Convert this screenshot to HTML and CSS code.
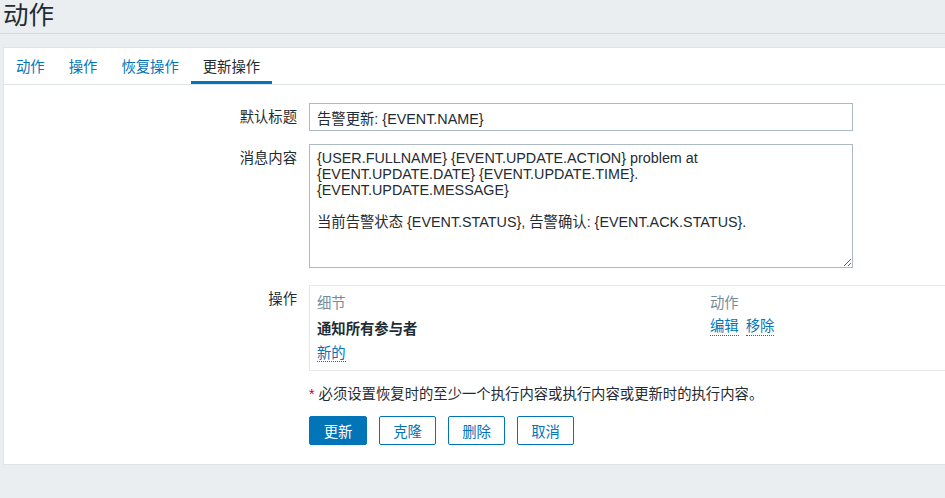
FILE: index.html
```html
<!DOCTYPE html>
<html lang="zh-CN">
<head>
<meta charset="utf-8">
<title>动作</title>
<link rel="stylesheet" href="styles.css">
</head>
<body>
<header class="page-header">
  <h1 class="page-title">动作</h1>
</header>
<main class="panel">
  <nav class="tabs">
    <a class="tab">动作</a>
    <a class="tab">操作</a>
    <a class="tab">恢复操作</a>
    <a class="tab tab-active">更新操作</a>
  </nav>
  <form class="form">
    <div class="row row-subject">
      <label class="label label-input">默认标题</label>
      <div class="field"><input class="text-input" type="text" value="告警更新: {EVENT.NAME}"></div>
    </div>
    <div class="row row-message">
      <label class="label label-area">消息内容</label>
      <div class="field"><textarea class="text-area">{USER.FULLNAME} {EVENT.UPDATE.ACTION} problem at {EVENT.UPDATE.DATE} {EVENT.UPDATE.TIME}.
{EVENT.UPDATE.MESSAGE}

当前告警状态 {EVENT.STATUS}, 告警确认: {EVENT.ACK.STATUS}.</textarea></div>
    </div>
    <div class="row row-ops">
      <label class="label label-ops">操作</label>
      <div class="field">
        <div class="ops-box">
          <div class="ops-line ops-head">
            <span class="col-detail">细节</span>
            <span class="col-action">动作</span>
          </div>
          <div class="ops-line">
            <span class="col-detail strong">通知所有参与者</span>
            <span class="col-action"><a class="link">编辑</a><a class="link">移除</a></span>
          </div>
          <div class="ops-line">
            <span class="col-detail"><a class="link">新的</a></span>
          </div>
        </div>
      </div>
    </div>
    <div class="row row-note">
      <div class="label"></div>
      <div class="field note"><span class="asterisk">*</span> 必须设置恢复时的至少一个执行内容或执行内容或更新时的执行内容。</div>
    </div>
    <div class="row row-buttons">
      <div class="label"></div>
      <div class="field buttons">
        <button type="button" class="btn btn-primary">更新</button>
        <button type="button" class="btn">克隆</button>
        <button type="button" class="btn">删除</button>
        <button type="button" class="btn">取消</button>
      </div>
    </div>
  </form>
</main>
</body>
</html>
```
FILE: styles.css
```css
html, body {
  margin: 0;
  padding: 0;
}
body {
  background: #ebeef0;
  font-family: "Liberation Sans", "Noto Sans CJK SC", sans-serif;
  font-size: 14.35px;
  color: #1f2c33;
  overflow: hidden;
  width: 945px;
  height: 498px;
}
.page-header {
  height: 33px;
  border-bottom: 1px solid #d5dadd;
  padding-left: 3px;
}
.page-title {
  margin: 0;
  font-weight: normal;
  font-size: 25.5px;
  line-height: 30px;
  color: #1f2c33;
}
.panel {
  display: block;
  margin: 13px 0 0 3px;
  background: #fff;
  border: 1px solid #dfe4e7;
  border-right: none;
  height: 416px;
  overflow: hidden;
}
.tabs {
  display: flex;
  border-bottom: 1px solid #dfe4e7;
  height: 36px;
}
.tab {
  display: block;
  padding: 0 12px;
  height: 33px;
  color: #0275b8;
  white-space: nowrap;
  border-bottom: 3px solid transparent;
  line-height: 38px;
}
.tab-active {
  color: #1f2c33;
  border-bottom-color: #0275b8;
}
.form {
  padding-top: 18px;
}
.row {
  display: grid;
  grid-template-columns: 293px 1fr;
  column-gap: 12px;
}
.label {
  text-align: right;
  line-height: 16px;
}
.label-input { padding-top: 6px; }
.label-area { padding-top: 6px; }
.label-ops { padding-top: 6px; }
.row-message { margin-top: 13px; }
.row-ops { margin-top: 17px; }
.row-note { margin-top: 14px; }
.row-buttons { margin-top: 13px; }
.text-input {
  box-sizing: border-box;
  width: 544px;
  height: 28px;
  border: 1px solid #acbbc2;
  padding: 0 7px;
  font: inherit;
  color: #1f2c33;
  margin: 0;
  display: block;
}
.text-area {
  box-sizing: border-box;
  width: 544px;
  height: 124px;
  border: 1px solid #acbbc2;
  padding: 5px 7px;
  font: inherit;
  line-height: 16px;
  color: #1f2c33;
  margin: 0;
  display: block;
  resize: both;
}
.ops-box {
  width: 660px;
  height: 86px;
  box-sizing: border-box;
  border: 1px solid #e5e8ea;
  padding: 2px 7px;
}
.ops-line {
  display: flex;
  height: 26px;
  align-items: center;
}
.ops-head { color: #768d99; }
.col-detail { width: 393px; }
.col-action { display: flex; gap: 7px; }
.strong { font-weight: bold; }
.link {
  color: #0275b8;
  border-bottom: 1px dotted #0275b8;
  line-height: 17px;
}
.note {
  line-height: 18px;
}
.asterisk { color: #d40000; }
.buttons {
  display: flex;
  gap: 12px;
}
.btn {
  box-sizing: border-box;
  height: 29px;
  width: 57px;
  padding: 0;
  background: #fff;
  border: 1px solid #0275b8;
  border-radius: 2px;
  color: #0275b8;
  font: inherit;
  margin: 0;
}
.btn-primary {
  width: 58px;
  background: #0275b8;
  color: #fff;
}
```
